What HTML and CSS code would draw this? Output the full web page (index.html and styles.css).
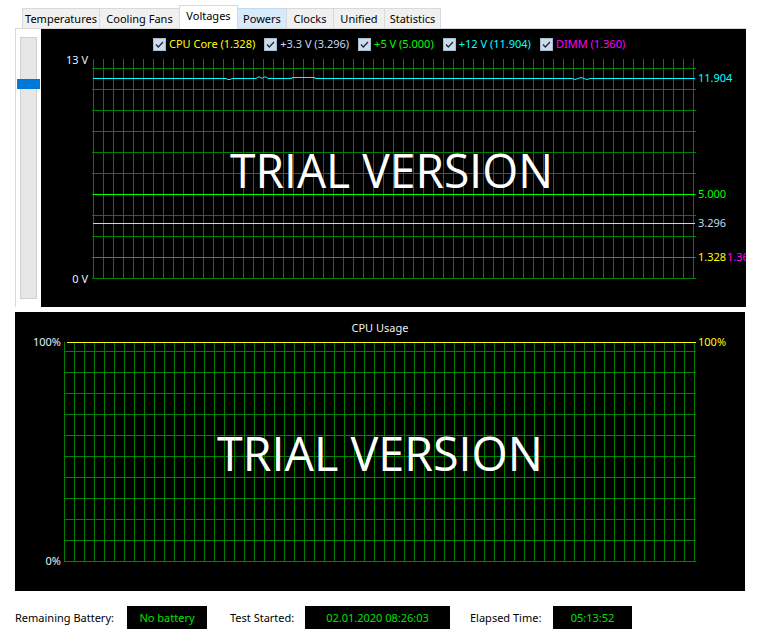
FILE: index.html
```html
<!DOCTYPE html>
<html lang="en">
<head>
<meta charset="UTF-8">
<title>Voltages</title>
<link rel="stylesheet" href="styles.css">
</head>
<body>

<div class="tabs">
  <div class="tab tab-temp">Temperatures</div>
  <div class="tab tab-fans">Cooling Fans</div>
  <div class="tab tab-volt active">Voltages</div>
  <div class="tab tab-pow hover">Powers</div>
  <div class="tab tab-clk">Clocks</div>
  <div class="tab tab-uni">Unified</div>
  <div class="tab tab-stat">Statistics</div>
</div>

<div class="panel">
  <div class="slider">
    <div class="track"><div class="thumb"></div></div>
  </div>

  <div class="chart chart-volt">
    <div class="legend">
      <label class="legend-item c-yellow"><span class="check"><svg viewBox="0 0 11 11"><path d="M2 5.5l2.3 2.5 4.7-5"/></svg></span>CPU Core (1.328)</label>
      <label class="legend-item c-light"><span class="check"><svg viewBox="0 0 11 11"><path d="M2 5.5l2.3 2.5 4.7-5"/></svg></span>+3.3 V (3.296)</label>
      <label class="legend-item c-green"><span class="check"><svg viewBox="0 0 11 11"><path d="M2 5.5l2.3 2.5 4.7-5"/></svg></span>+5 V (5.000)</label>
      <label class="legend-item c-cyan"><span class="check"><svg viewBox="0 0 11 11"><path d="M2 5.5l2.3 2.5 4.7-5"/></svg></span>+12 V (11.904)</label>
      <label class="legend-item c-magenta"><span class="check"><svg viewBox="0 0 11 11"><path d="M2 5.5l2.3 2.5 4.7-5"/></svg></span>DIMM (1.360)</label>
    </div>
    <svg class="plot" width="705" height="256" viewBox="0 0 705 256">
      <defs>
        <pattern id="vgrid1" x="52" y="0" width="10" height="10" patternUnits="userSpaceOnUse"><rect width="1" height="10" fill="#008000"/></pattern>
        <pattern id="hgrid1" x="0" y="17" width="10" height="21" patternUnits="userSpaceOnUse"><rect width="10" height="1" fill="#008000"/></pattern>
      </defs>
      <rect x="52" y="8" width="601" height="220" fill="url(#vgrid1)"/>
      <rect x="51" y="17" width="604" height="211" fill="url(#hgrid1)"/>

      <!-- series -->
      <path class="line" stroke="#00ffff" d="M52 27.5H185l2 1 2 0 2-1H215l2-1.5h2l2 1.5 2-1.5h2l2 1.5H251v-1H274v1H531l3 1 3-1 3-1 3 1 3 1 3-1H654"/>
      <rect x="52" y="143" width="602" height="1" fill="#00ff00"/>
      <rect x="52" y="172" width="602" height="1" fill="#c4d8f0"/>
      <rect x="52" y="206" width="602" height="1" fill="#ff00ff"/>

      <text class="axis" x="47" y="13" text-anchor="end">13 V</text>
      <text class="axis" x="47" y="232" text-anchor="end">0 V</text>

      <text class="val" x="657" y="31" fill="#00ffff">11.904</text>
      <text class="val" x="657" y="147" fill="#00ff00">5.000</text>
      <text class="val" x="657" y="176" fill="#c4d8f0">3.296</text>
      <text class="val" x="657" y="210" fill="#ffff00">1.328</text>
      <text class="val" x="686" y="210" fill="#ff00ff">1.360</text>

      <text class="trial" x="189" y="137" textLength="323" lengthAdjust="spacingAndGlyphs">TRIAL VERSION</text>
    </svg>
  </div>
</div>

<div class="chart chart-cpu">
  <div class="chart-title">CPU Usage</div>
  <svg class="plot" width="730" height="256" viewBox="0 0 730 256">
    <defs>
      <pattern id="vgrid2" x="49" y="0" width="10" height="10" patternUnits="userSpaceOnUse"><rect width="1" height="10" fill="#008000"/></pattern>
      <pattern id="hgrid2" x="0" y="16" width="10" height="21" patternUnits="userSpaceOnUse"><rect width="10" height="1" fill="#008000"/></pattern>
    </defs>
    <rect x="49" y="7" width="631" height="220" fill="url(#vgrid2)"/>
    <rect x="49" y="16" width="632" height="211" fill="url(#hgrid2)"/>
    <rect x="52" y="7" width="629" height="1" fill="#ffff00"/>

    <text class="axis" x="46" y="11" text-anchor="end">100%</text>
    <text class="axis" x="46" y="230" text-anchor="end">0%</text>
    <text class="val" x="683" y="11" fill="#ffff00">100%</text>

    <text class="trial" x="202" y="136" textLength="326" lengthAdjust="spacingAndGlyphs">TRIAL VERSION</text>
  </svg>
</div>

<div class="status">
  <span class="status-label">Remaining Battery:</span>
  <span class="status-box">No battery</span>
  <span class="status-label">Test Started:</span>
  <span class="status-box">02.01.2020 08:26:03</span>
  <span class="status-label">Elapsed Time:</span>
  <span class="status-box">05:13:52</span>
</div>

</body>
</html>
```

FILE: styles.css
```css
html,body{
  margin:0;
  padding:0;
  background:#fff;
  color:#000;
  font-family:"Noto Sans","Liberation Sans",sans-serif;
  font-size:11px;
}

/* ----------  TABS  ---------- */
.tabs{
  display:flex;
  align-items:flex-end;
  height:28px;
  padding-left:23px;
}
.tab{
  box-sizing:border-box;
  height:20px;
  line-height:19px;
  text-align:center;
  border:1px solid #d9d9d9;
  border-bottom:none;
  background:#f0f0f0;
  margin-left:-1px;
  white-space:nowrap;
}
.tab-temp{width:78px;}
.tab-fans{width:81px;}
.tab-volt{width:59px;}
.tab-pow{width:50px;}
.tab-clk{width:48px;}
.tab-uni{width:52px;}
.tab-stat{width:57px;}

.tab.hover{
  background:#d8eaf9;
  border-color:#c0dcf3;
}
.tab.active{
  position:relative;
  z-index:1;
  height:24px;
  line-height:20px;
  background:#fff;
  margin-bottom:-1px;
}

/* ----------  PANEL  ---------- */
.panel{
  display:flex;
  margin-left:15px;
  width:731px;
  border-top:1px solid #d9d9d9;
  border-left:1px solid #d9d9d9;
}
.slider{
  width:25px;
}
.track{
  position:relative;
  margin:8px 0 0 4px;
  width:15px;
  height:260px;
  background:#e6e7e8;
  border:1px solid #d0d0d0;
}
.thumb{
  position:absolute;
  left:-4px;
  top:41px;
  width:23px;
  height:10px;
  background:#0078d7;
}

/* ----------  CHARTS  ---------- */
.chart{
  background:#000;
  overflow:hidden;
}
.chart .plot{
  display:block;
}
.chart-volt{
  width:705px;
  height:278px;
}
.chart-cpu{
  width:730px;
  height:279px;
  margin:5px 0 0 15px;
}

.legend{
  display:flex;
  gap:9px;
  padding:8px 0 0 112px;
  height:14px;
  line-height:14px;
}
.legend-item{
  display:flex;
  align-items:center;
  gap:3px;
  white-space:nowrap;
}
.check{
  width:11px;
  height:11px;
  border:1px solid #a9bccd;
  background:#cddcec;
}
.check svg{
  display:block;
  width:11px;
  height:11px;
  fill:none;
  stroke:#1c2a3c;
  stroke-width:1.3;
}
.c-yellow{color:#ffff00;}
.c-light{color:#c4d8f0;}
.c-green{color:#00ff00;}
.c-cyan{color:#00ffff;}
.c-magenta{color:#ff00ff;}

.chart-title{
  padding-top:9px;
  height:14px;
  line-height:14px;
  text-align:center;
  color:#eee;
}

.line{
  fill:none;
  stroke-width:1;
}
.axis{
  font-family:"Noto Sans",sans-serif;
  font-size:11px;
  fill:#e6efff;
}
.val{
  font-family:"Noto Sans",sans-serif;
  font-size:11px;
}
.trial{
  font-family:"Open Sans",sans-serif;
  font-size:48px;
  fill:#fff;
}

/* ----------  STATUS BAR  ---------- */
.status{
  display:grid;
  grid-template-columns:112px 80px 98px 145px 103px 79px;
  align-items:center;
  margin:15px 0 0 15px;
  height:23px;
}
.status-label{
  white-space:nowrap;
}
.status-label:nth-child(3){padding-left:23px;}
.status-label:nth-child(5){padding-left:20px;}
.status-box{
  height:23px;
  line-height:23px;
  background:#000;
  color:#00e000;
  text-align:center;
}
```
